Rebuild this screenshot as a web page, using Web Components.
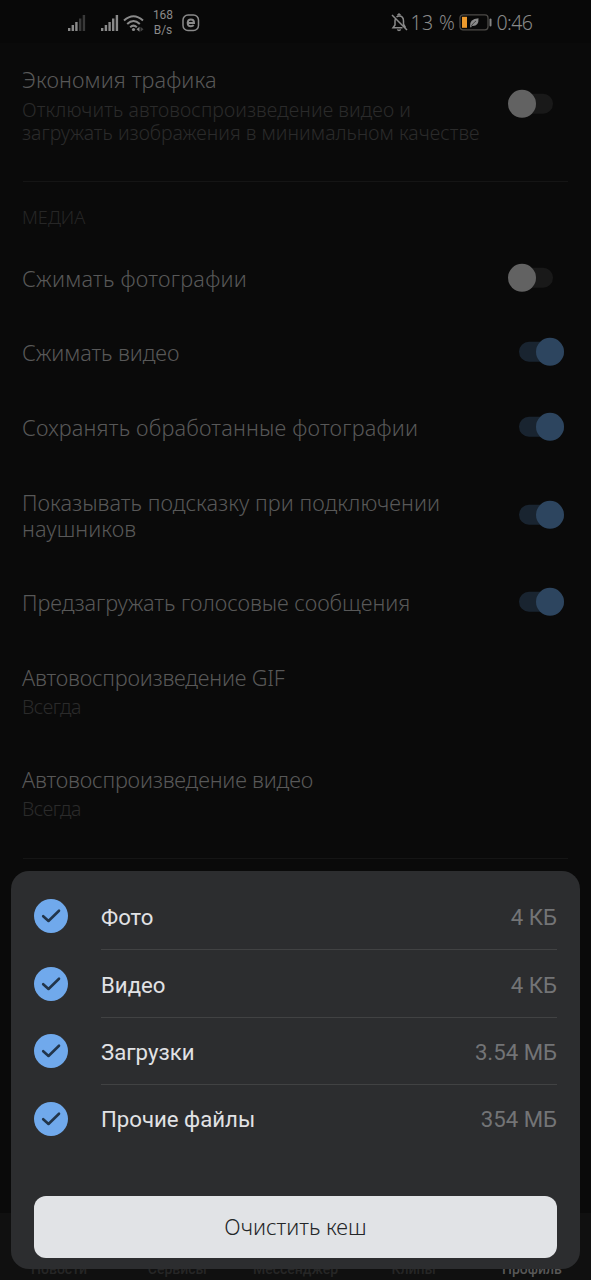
<!DOCTYPE html>
<html lang="ru">
<head>
<meta charset="utf-8">
<title>Настройки</title>
<style>
body{margin:0;background:#0a0a0a;width:591px;height:1280px;overflow:hidden;font-family:"Noto Sans","Open Sans",sans-serif;font-weight:300}
</style>
</head>
<body>
<settings-screen></settings-screen>
<script>
function define(name, html, setup) {
  const template = document.createElement('template');
  template.innerHTML = html;
  customElements.define(name, class extends HTMLElement {
    constructor() {
      super();
      this.attachShadow({ mode: 'open' }).append(template.content.cloneNode(true));
    }
    connectedCallback() { if (setup) setup(this, this.shadowRoot); }
  });
}

define('status-bar', `
<style>
:host{display:flex;align-items:center;height:42.5px;box-sizing:border-box;color:#8a8a8a;font-size:19.5px;line-height:26px;padding:3px 58.5px 0 67px;background:#080808}
svg{display:block;flex:none}
.rate{font:400 12px/14.5px Roboto,sans-serif;text-align:center;width:22px;margin:0 8px 0 7px}
.space{flex:1}
.s2{margin-left:13px}.wifi{margin-left:3px}
.pct{margin-left:3px;width:45px;white-space:nowrap;letter-spacing:.4px}.bat{margin:0 4px 0 3px}.time{width:36px;white-space:nowrap;letter-spacing:-.6px}
</style>
<svg width="20" height="18" viewBox="0 0 20 18" fill="#8a8a8a"><rect x="1" y="14" width="2.4" height="3"/><rect x="4.6" y="11" width="2.4" height="6"/><rect x="8.2" y="8" width="2.4" height="9"/><g fill="#393939"><rect x="12" y="4.500" width="2.400" height="12.500"/><rect x="15.700" y="1" width="2.400" height="16"/></g></svg>
<svg class="s2" width="20" height="18" viewBox="0 0 20 18" fill="#8a8a8a"><rect x="1" y="14" width="2.400" height="3"/><rect x="4.700" y="11" width="2.400" height="6"/><rect x="8.400" y="8" width="2.400" height="9"/><rect x="12" y="4.500" width="2.400" height="12.500"/><rect x="15.700" y="1" width="2.400" height="16"/></svg>
<svg class="wifi" width="22" height="18" viewBox="0 0 22 18" fill="none" stroke="#8a8a8a" stroke-width="2"><path d="M1 6.500Q10.500-2 20 6.500M4.200 10Q10.500 4 16.800 10M7.200 13.200Q10.500 10 13.800 13.200"/><circle cx="10.500" cy="15.500" r="1.600" fill="#8a8a8a" stroke="none"/><path d="M16.500 12.800v5l-3-2.500z" fill="#8a8a8a" stroke="none"/><path d="M17.500 12.800v5l3-2.500z" fill="#444" stroke="none"/></svg>
<div class="rate">168<br>B/s</div>
<svg width="18" height="18" viewBox="0 0 18 18" fill="none" stroke="#8a8a8a"><rect x="1" y="1" width="15.500" height="15.500" rx="5" stroke-width="1.500"/><path d="M5.700 8.900H12Q12 5.500 8.900 5.500T5.700 8.900T9 12.200Q10.700 12.200 11.700 11.100" stroke-width="2"/></svg>
<div class="space"></div>
<svg width="17" height="19" viewBox="0 0 17 19" fill="none" stroke="#8a8a8a" stroke-width="1.500"><path d="M5.500 4Q6.700 3 8 3Q12.500 3 12.500 8V11L14.500 14.500M11.500 14.800H2L4 12V8Q4 7 4.300 6.200M1 2L16 17"/><path d="M6.500 2.300L8 1l1.500 1.300M6.300 16.500Q8 18.300 9.700 16.500"/></svg>
<span class="pct">13 %</span>
<svg class="bat" width="34" height="17" viewBox="0 0 34 17"><rect x="1" y=".8" width="28" height="15" rx="3" fill="none" stroke="#4c4a47" stroke-width="1.300"/><rect x="3" y="2.800" width="5" height="11" fill="#ed9a2d"/><path d="M11 13Q10 5 19.500 4.300Q20 12.500 13 12L12 13.500z" fill="#8a8a8a"/><path d="M12 12.500Q14 9 17 7" stroke="#222" stroke-width=".7" fill="none"/><rect x="30.500" y="4.500" width="2" height="8" rx="1" fill="#858585"/></svg>
<span class="time">0:46</span>`);

define('toggle-switch', `
<style>
:host{display:block;margin:-2px 38px -2px 0}
.track{width:45px;height:20px;margin:4px 0;border-radius:10px;background:#191919;display:flex;align-items:center}
.thumb{width:28px;height:28px;border-radius:50%;background:#626262;flex:none}
:host([on]){margin-right:27.5px}
:host([on]) .track{background:#192430;justify-content:flex-end}
:host([on]) .thumb{background:#2d455f}
</style><div class="track"><div class="thumb"></div></div>`);

define('setting-row', `
<style>
:host{display:flex;align-items:center;padding:24.9px 0 23.8px 22px}
.text{flex:1;min-width:0}
.title{display:block;font-size:21.7px;line-height:26px;color:#585858;white-space:nowrap;letter-spacing:var(--title-spacing,0)}
.sub{display:block;font-size:19.4px;line-height:23px;color:#2b2b2b;margin:4.300px 0 -.3px;white-space:nowrap;letter-spacing:var(--sub-spacing,0)}
toggle-switch{flex:none;transform:translateY(-1.2px)}
[hidden]{display:none}
</style>
<div class="text"><span class="title"><slot></slot></span><span class="sub"><slot name="sub"></slot></span></div>`,
(host, root) => {
  const mode = host.getAttribute('toggle');
  if (!host.querySelector('[slot=sub]')) root.querySelector('.sub').hidden = true;
  if (mode) {
    const t = document.createElement('toggle-switch');
    if (mode === 'on') t.setAttribute('on', '');
    root.append(t);
  }
});

define('section-title', `
<style>:host{display:block;padding:0 22px;font-size:18.2px;line-height:24px;color:#262626}</style><slot></slot>`);

define('line-divider', `
<style>:host{display:block;height:1px;margin:0 23px;background:#151515}</style>`);

define('cache-row', `
<style>
:host{display:flex;align-items:stretch;height:67.4px;padding:0 23px;font:400 22.2px/28px Roboto,sans-serif;color:#e1e2e5}
svg{flex:none;width:34px;height:34px;margin:16.700px 33.500px 0 -.5px}
.body{flex:1;display:flex;justify-content:space-between;padding-top:20.4px;box-sizing:border-box;height:100%;border-bottom:1px solid #414243}
:host(:last-of-type) .body{border-bottom-color:transparent}
.size{color:#737476}
</style>
<svg viewBox="0 0 34 34"><circle cx="17" cy="17" r="17" fill="#70a9ec"/><path d="M9.200 17.200L14.500 22L25 11.700" fill="none" stroke="#22354a" stroke-width="2.600" stroke-linecap="round" stroke-linejoin="round"/></svg>
<div class="body"><slot></slot><span class="size"><slot name="size"></slot></span></div>`);

define('action-button', `
<style>
:host{display:block}
button{all:unset;display:block;box-sizing:border-box;width:100%;height:62px;border-radius:12px;background:#e1e3e6;color:#242628;font:300 21.7px/62px "Noto Sans",sans-serif;text-align:center}
</style><button><slot></slot></button>`);

define('bottom-sheet', `
<style>
:host{position:absolute;left:11px;top:871px;width:569px;height:398px;box-sizing:border-box;border-radius:18px;background:#2c2d2f;display:flex;flex-direction:column;justify-content:space-between;padding:11.800px 0 11px}
.foot{padding:0 23px}
</style><div><slot></slot></div><div class="foot"><slot name="action"></slot></div>`);

define('tab-bar', `
<style>
:host{position:absolute;left:0;right:0;bottom:0;height:67px;display:flex;background:#101010;font:500 14px/16px Roboto,sans-serif;color:#262626}
::slotted(span){flex:1;text-align:center;padding-top:48px}
::slotted(.active){color:#575757}
</style><slot></slot>`);

define('settings-screen', `
<style>
:host{display:block;position:relative;width:591px;height:1280px;overflow:hidden;background:#0a0a0a}
.d1{margin-top:13.800px}
section-title{margin:22.900px 0 11.900px}
.d2{margin-top:14.500px}
</style>
<status-bar></status-bar>
<setting-row toggle="off" style="--title-spacing:.12px;--sub-spacing:.04px">Экономия трафика<span slot="sub"><span style="letter-spacing:.12px">Отключить автовоспроизведение видео и</span><br>загружать изображения в минимальном качестве</span></setting-row>
<line-divider class="d1"></line-divider>
<section-title>МЕДИА</section-title>
<setting-row toggle="off" style="--title-spacing:.24px">Сжимать фотографии</setting-row>
<setting-row toggle="on" style="--title-spacing:-.08px">Сжимать видео</setting-row>
<setting-row toggle="on" style="--title-spacing:.18px">Сохранять обработанные фотографии</setting-row>
<setting-row toggle="on" style="--title-spacing:.04px">Показывать подсказку при подключении<br>наушников</setting-row>
<setting-row toggle="on" style="--title-spacing:-.03px">Предзагружать голосовые сообщения</setting-row>
<setting-row style="--title-spacing:-.2px;--sub-spacing:-.4px">Автовоспроизведение GIF<span slot="sub">Всегда</span></setting-row>
<setting-row style="--title-spacing:-.18px;--sub-spacing:-.4px">Автовоспроизведение видео<span slot="sub">Всегда</span></setting-row>
<line-divider class="d2"></line-divider>
<tab-bar><span>Новости</span><span>Сервисы</span><span>Мессенджер</span><span>Клипы</span><span class="active">Профиль</span></tab-bar>
<bottom-sheet>
<cache-row>Фото<span slot="size">4 КБ</span></cache-row>
<cache-row>Видео<span slot="size">4 КБ</span></cache-row>
<cache-row>Загрузки<span slot="size">3.54 МБ</span></cache-row>
<cache-row>Прочие файлы<span slot="size">354 МБ</span></cache-row>
<action-button slot="action">Очистить кеш</action-button>
</bottom-sheet>`);
</script>
</body>
</html>
